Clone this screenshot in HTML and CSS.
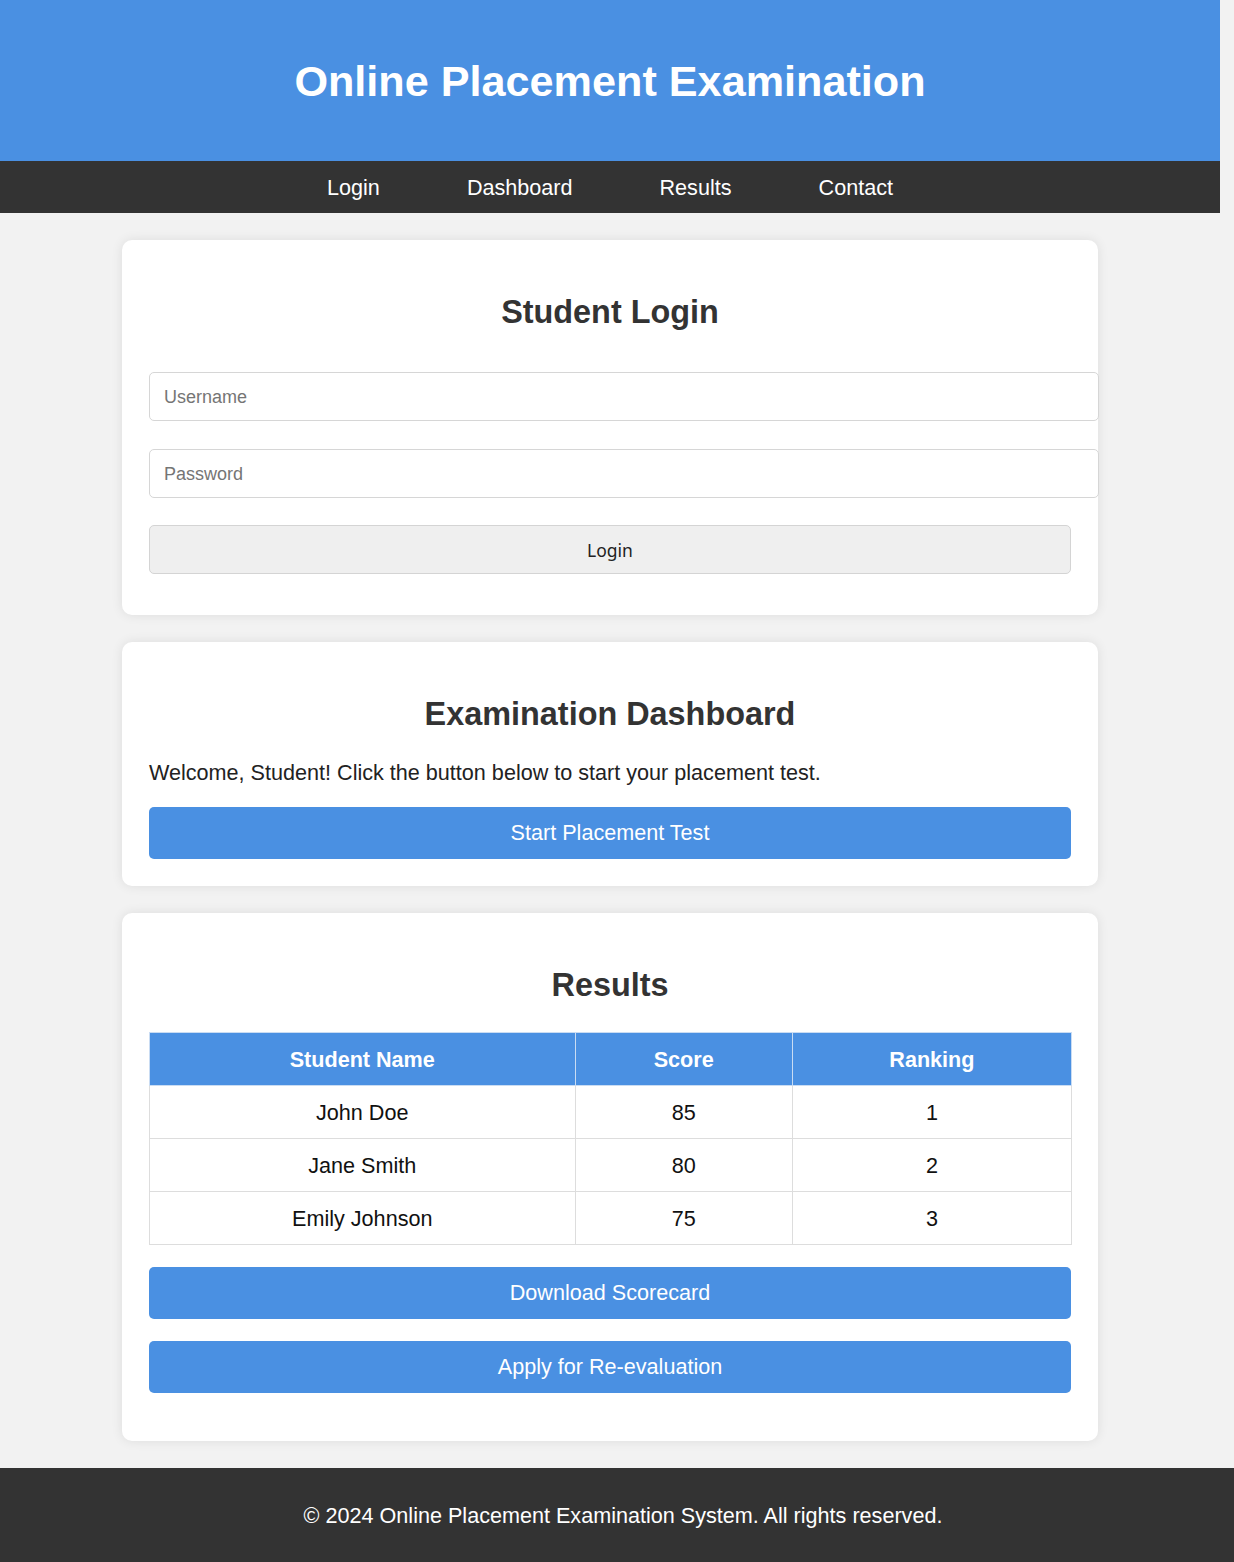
FILE: index.html
```html
<!DOCTYPE html>
<html lang="en">
<head>
<meta charset="utf-8">
<title>Online Placement Examination</title>
<link rel="stylesheet" href="styles.css">
</head>
<body>
<div class="top">
  <header class="site-header">
    <h1>Online Placement Examination</h1>
  </header>
  <nav class="site-nav">
    <a href="#login">Login</a>
    <a href="#dashboard">Dashboard</a>
    <a href="#results">Results</a>
    <a href="#contact">Contact</a>
  </nav>
</div>

<main class="main">
  <section class="card" id="login">
    <h2>Student Login</h2>
    <form class="login-form">
      <input class="field" type="text" placeholder="Username">
      <input class="field" type="password" placeholder="Password">
      <button class="login-btn" type="button">Login</button>
    </form>
  </section>

  <section class="card" id="dashboard">
    <h2>Examination Dashboard</h2>
    <p class="welcome">Welcome, Student! Click the button below to start your placement test.</p>
    <button class="primary-btn" type="button">Start Placement Test</button>
  </section>

  <section class="card" id="results">
    <h2>Results</h2>
    <table class="results-table">
      <thead>
        <tr>
          <th class="col-name">Student Name</th>
          <th class="col-score">Score</th>
          <th class="col-rank">Ranking</th>
        </tr>
      </thead>
      <tbody>
        <tr><td>John Doe</td><td>85</td><td>1</td></tr>
        <tr><td>Jane Smith</td><td>80</td><td>2</td></tr>
        <tr><td>Emily Johnson</td><td>75</td><td>3</td></tr>
      </tbody>
    </table>
    <button class="primary-btn spaced" type="button">Download Scorecard</button>
    <button class="primary-btn spaced" type="button">Apply for Re-evaluation</button>
  </section>
</main>

<footer class="site-footer" id="contact">
  <p>&copy; 2024 Online Placement Examination System. All rights reserved.</p>
</footer>
</body>
</html>
```

FILE: styles.css
```css
* {
  box-sizing: content-box;
}

html, body {
  margin: 0;
  padding: 0;
}

body {
  background: #f2f2f2;
  font-family: "Liberation Sans", Arial, sans-serif;
  font-size: 21.6px;
  color: #333;
}

.top {
  margin-right: 14px;
}

.site-header {
  background: #4a90e2;
  color: #fff;
  text-align: center;
  height: 161px;
  display: flex;
  align-items: center;
  justify-content: center;
}

.site-header h1 {
  margin: 0;
  font-size: 43.2px;
  font-weight: bold;
  line-height: 50px;
}

.site-nav {
  background: #333;
  height: 52px;
  display: flex;
  align-items: center;
  justify-content: center;
  gap: 87px;
}

.site-nav a {
  color: #fff;
  text-decoration: none;
  font-size: 21.6px;
  line-height: 25px;
}

.main {
  width: 976px;
  margin: 27px 0 27px 122px;
  display: flex;
  flex-direction: column;
  gap: 27px;
}

.card {
  background: #fff;
  border-radius: 10px;
  box-shadow: 0 0 12px rgba(0, 0, 0, 0.09);
  padding: 27px;
}

.card h2 {
  margin: 27px 0;
  font-size: 32.4px;
  line-height: 37px;
  text-align: center;
  color: #333;
}

.login-form {
  display: flex;
  flex-direction: column;
  align-items: flex-start;
}

.field {
  display: block;
  width: 920px;
  padding: 14px 14px 13px;
  margin: 0 0 28px;
  border: 1px solid #d6d6d6;
  border-radius: 5px;
  font-family: "Liberation Sans", Arial, sans-serif;
  font-size: 18px;
  line-height: 20px;
  color: #333;
  background: #fff;
}

.field:first-child {
  margin-top: 14px;
}

.field + .field {
  margin-bottom: 27px;
}

.field::placeholder {
  color: #757575;
}

.login-btn {
  box-sizing: border-box;
  width: 922px;
  height: 49px;
  margin: 0 0 14px;
  background: #efefef;
  border: 1px solid #d4d4d4;
  border-radius: 5px;
  font-family: "Noto Sans", "Open Sans", sans-serif;
  font-size: 17.5px;
  color: #222;
}

.welcome {
  margin: 0 0 22px;
  font-size: 21.6px;
  line-height: 25px;
  color: #222;
}

.primary-btn {
  display: block;
  box-sizing: border-box;
  width: 100%;
  height: 52px;
  background: #4a90e2;
  color: #fff;
  border: none;
  border-radius: 5px;
  font-family: "Liberation Sans", Arial, sans-serif;
  font-size: 21.6px;
}

.spaced {
  margin: 22px 0 0;
}

.spaced + .spaced {
  margin-bottom: 21px;
}

.results-table {
  width: 100%;
  border-collapse: collapse;
  margin-top: 28px;
}

.results-table th,
.results-table td {
  border: 1px solid #ddd;
  text-align: center;
  height: 52px;
  padding: 0;
  font-size: 21.6px;
  line-height: 25px;
}

.results-table th {
  background: #4a90e2;
  color: #fff;
  font-weight: bold;
  border-color: #c9dcf3;
}

.results-table td {
  color: #111;
}

.col-name { width: 426px; }
.col-score { width: 217px; }
.col-rank { width: 279px; }

.site-footer {
  background: #333;
  color: #fff;
  text-align: center;
  padding: 35px 0 35px 12px;
}

.site-footer p {
  margin: 0;
  font-size: 21.6px;
  line-height: 25px;
}
```
